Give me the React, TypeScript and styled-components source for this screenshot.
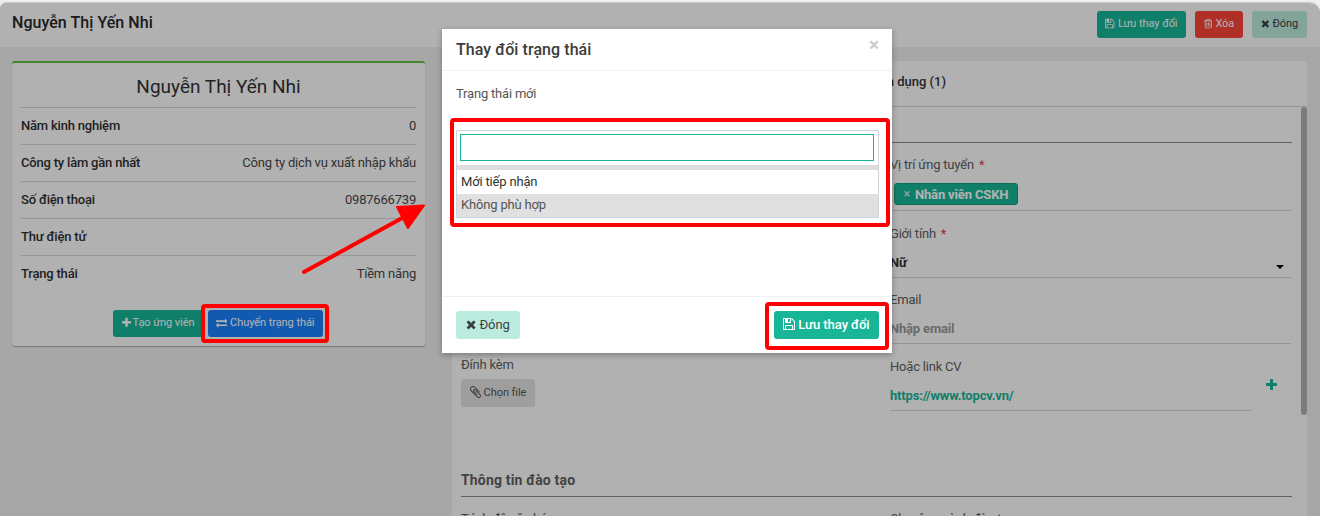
import React from "react";
import styled, { createGlobalStyle } from "styled-components";

const Global = createGlobalStyle`
  *, *::before, *::after { box-sizing: border-box; }
  html, body { margin: 0; height: 516px; overflow: hidden; }
  body { font-family: Roboto, "Noto Sans", sans-serif; font-size: 13px; color: #333; background: #ededf2; }
`;

/* ---------- icons ---------- */

const glyphs = {
  save: { box: "128 0 1536 1792", w: 0.857, d: "M512 1536h768v-384h-768v384zm896 0h128v-896q0-14-10-38.5t-20-34.5l-281-281q-10-10-34-20t-39-10v416q0 40-28 68t-68 28h-576q-40 0-68-28t-28-68v-416h-128v1280h128v-416q0-40 28-68t68-28h832q40 0 68 28t28 68v416zm-384-928v-320q0-13-9.5-22.5t-22.5-9.5h-192q-13 0-22.5 9.5t-9.5 22.5v320q0 13 9.5 22.5t22.5 9.5h192q13 0 22.5-9.5t9.5-22.5zm640 32v928q0 40-28 68t-68 28h-1344q-40 0-68-28t-28-68v-1344q0-40 28-68t68-28h928q40 0 88 20t76 48l280 280q28 28 48 76t20 88z" },
  trash: { box: "192 0 1408 1792", w: 0.786, d: "M704 736v576q0 14-9 23t-23 9h-64q-14 0-23-9t-9-23v-576q0-14 9-23t23-9h64q14 0 23 9t9 23zm256 0v576q0 14-9 23t-23 9h-64q-14 0-23-9t-9-23v-576q0-14 9-23t23-9h64q14 0 23 9t9 23zm256 0v576q0 14-9 23t-23 9h-64q-14 0-23-9t-9-23v-576q0-14 9-23t23-9h64q14 0 23 9t9 23zm128 724v-948h-896v948q0 22 7 40.5t14.5 27 10.5 8.5h832q3 0 10.5-8.5t14.5-27 7-40.5zm-672-1076h448l-48-117q-7-9-17-11h-317q-10 2-17 11zm928 32v64q0 14-9 23t-23 9h-96v948q0 83-47 143.5t-113 60.5h-832q-66 0-113-58.5t-47-141.5v-952h-96q-14 0-23-9t-9-23v-64q0-14 9-23t23-9h309l70-167q15-37 54-63t79-26h320q40 0 79 26t54 63l70 167h309q14 0 23 9t9 23z" },
  times: { box: "192 0 1408 1792", w: 0.786, d: "M1490 1322q0 40-28 68l-136 136q-28 28-68 28t-68-28l-294-294-294 294q-28 28-68 28t-68-28l-136-136q-28-28-28-68t28-68l294-294-294-294q-28-28-28-68t28-68l136-136q28-28 68-28t68 28l294 294 294-294q28-28 68-28t68 28l136 136q28 28 28 68t-28 68l-294 294 294 294q28 28 28 68z" },
  plus: { box: "192 0 1408 1792", w: 0.786, d: "M1600 736v192q0 40-28 68t-68 28h-416v416q0 40-28 68t-68 28h-192q-40 0-68-28t-28-68v-416h-416q-40 0-68-28t-28-68v-192q0-40 28-68t68-28h416v-416q0-40 28-68t68-28h192q40 0 68 28t28 68v416h416q40 0 68 28t28 68z" },
  exchange: { box: "0 0 1792 1792", w: 1, d: "M1792 1184v192q0 13-9.5 22.5t-22.5 9.5h-1376v192q0 13-9.5 22.5t-22.5 9.5q-12 0-24-10l-319-320q-9-9-9-22 0-14 9-23l320-320q9-9 23-9 13 0 22.5 9.5t9.5 22.5v192h1376q13 0 22.5 9.5t9.5 22.5zm0-544q0 14-9 23l-320 320q-9 9-23 9-13 0-22.5-9.5t-9.5-22.5v-192h-1376q-13 0-22.5-9.5t-9.5-22.5v-192q0-13 9.5-22.5t22.5-9.5h1376v-192q0-14 9-23t23-9q12 0 24 10l319 319q9 9 9 23z" },
  clip: { box: "192 0 1408 1792", w: 0.786, d: "M1596 1385q0 117-79 196t-196 79q-135 0-235-100l-777-776q-113-115-113-271 0-159 110-270t269-111q158 0 273 113l605 606q10 10 10 22 0 16-30.5 46.5t-46.5 30.5q-13 0-23-10l-606-607q-79-77-181-77-106 0-179 75t-73 181q0 105 76 181l776 777q63 63 145 63 64 0 106-42t42-106q0-82-63-145l-581-581q-26-24-60-24-29 0-48 19t-19 48q0 32 25 59l410 410q10 10 10 22 0 16-31 47t-47 31q-12 0-22-10l-410-410q-63-61-63-149 0-82 57-139t139-57q88 0 149 63l581 581q100 98 100 235z" },
};

const IconSvg = styled.svg`
  display: block;
  flex: none;
  fill: currentColor;
`;

function Icon({ name, size }: { name: keyof typeof glyphs; size: number }) {
  const g = glyphs[name];
  return (
    <IconSvg viewBox={g.box} width={size * g.w} height={size}>
      <path d={g.d} />
    </IconSvg>
  );
}

/* ---------- page ---------- */

const Page = styled.div`
  position: relative;
  width: 1320px;
  height: 516px;
  padding-top: 2px;
  overflow: hidden;
  background: #ededf2;
`;

const Window = styled.div`
  position: relative;
  height: 514px;
  border-top: 1px solid #c9c9cc;
  border-radius: 6px 10px 0 0;
  background: #efefef;
  overflow: hidden;
`;

const Header = styled.header`
  display: flex;
  justify-content: space-between;
  height: 44px;
  padding: 8px 13px 0 12px;
  background: #fefefe;
`;

const PageTitle = styled.h1`
  margin: 0;
  font-size: 16px;
  font-weight: 500;
  line-height: 24px;
  letter-spacing: 0.05px;
  color: #282828;
`;

const Actions = styled.div`
  display: flex;
  gap: 9px;
`;

type Tone = "primary" | "danger" | "soft" | "info" | "muted";
const tones: Record<Tone, [string, string]> = {
  primary: ["#18b697", "#fff"],
  danger: ["#fc4438", "#fff"],
  soft: ["#bbebdf", "#3c4043"],
  info: ["#1a82fc", "#fff"],
  muted: ["#e2e2e2", "#555"],
};

const Button = styled.button<{ $tone: Tone; $w: number; $h?: number; $size?: number; $weight?: number; $gap?: number }>`
  display: flex;
  align-items: center;
  justify-content: center;
  gap: ${(p) => p.$gap ?? 3}px;
  width: ${(p) => p.$w}px;
  height: ${(p) => p.$h ?? 27}px;
  padding: 0 0 2px;
  border: 0;
  border-radius: 3px;
  font-family: inherit;
  font-size: ${(p) => p.$size ?? 11}px;
  font-weight: ${(p) => p.$weight ?? 400};
  letter-spacing: -0.06px;
  white-space: nowrap;
  background: ${(p) => tones[p.$tone][0]};
  color: ${(p) => tones[p.$tone][1]};
`;

const Content = styled.main`
  display: flex;
  align-items: flex-start;
  gap: 27px;
  padding: 14px 13px 0 12px;
`;

const ProfileCard = styled.section`
  width: 413px;
  height: 285px;
  padding: 0 9px;
  border-top: 2px solid #5fc23b;
  border-radius: 3px;
  background: #fefefe;
  box-shadow: 0 1px 1px rgba(0, 0, 0, 0.3);
`;

const ProfileName = styled.h2`
  margin: 0;
  height: 44px;
  font-size: 19px;
  font-weight: 400;
  line-height: 47px;
  text-align: center;
  color: #333;
`;

const InfoRow = styled.div`
  display: flex;
  justify-content: space-between;
  height: 37px;
  border-top: 1px solid #d8d8d8;
  line-height: 36px;
  letter-spacing: -0.2px;
`;

const InfoLabel = styled.span`
  font-weight: 500;
  color: #303030;
`;

const InfoValue = styled.span`
  color: #484848;
`;

const CardActions = styled.div`
  display: flex;
  justify-content: center;
  gap: 4px;
  padding: 18px 2px 0 0;
`;

const FormCard = styled.section`
  width: 855px;
  height: 480px;
  border-radius: 3px;
  background: #fefefe;
`;

const Tabs = styled.div`
  height: 46px;
  padding-right: 361px;
  border-bottom: 1px solid #d8d8d8;
  text-align: right;
  font-weight: 500;
  line-height: 41px;
  color: #333;
`;

const FormScroll = styled.div`
  display: flex;
  justify-content: space-between;
  padding-left: 9px;
`;

const Form = styled.div`
  width: 831px;
`;

const SectionTitle = styled.h3<{ $h: number }>`
  display: flex;
  align-items: flex-end;
  margin: 0;
  height: ${(p) => p.$h}px;
  padding-bottom: 7px;
  border-bottom: 1px solid #8c8c8c;
  font-size: 14px;
  font-weight: 700;
  line-height: 17px;
  letter-spacing: 0.17px;
  color: #606060;
`;

const FieldGrid = styled.div`
  display: grid;
  grid-template-columns: 402px 401px;
  column-gap: 27px;
  grid-template-rows: 68px 67px 66px 67px;
`;

const Field = styled.div<{ $w?: number }>`
  display: flex;
  flex-direction: column;
  justify-content: space-between;
  width: ${(p) => (p.$w ? p.$w + "px" : "auto")};
  border-bottom: 1px solid #d5d5d9;
`;

const Label = styled.label<{ $top?: number }>`
  display: block;
  padding-top: ${(p) => p.$top ?? 14}px;
  line-height: 16px;
  letter-spacing: -0.2px;
  color: #606060;
`;

const Required = styled.span`
  margin-left: 5px;
  color: #e23c4a;
`;

const Value = styled.div<{ $color: string }>`
  display: flex;
  justify-content: space-between;
  height: 29px;
  font-weight: 700;
  line-height: 29px;
  letter-spacing: -0.18px;
  color: ${(p) => p.$color};
`;

const Chip = styled.span`
  display: flex;
  align-items: center;
  justify-content: center;
  gap: 5px;
  width: 124px;
  height: 22px;
  margin: 0 0 5px 4px;
  border: 1px solid #159a80;
  border-radius: 3px;
  background: #18b697;
  color: #fff;
  font-weight: 700;
  letter-spacing: -0.15px;
`;

const ChipClose = styled.span`
  font-size: 12px;
  color: #c5e9e1;
`;

const Caret = styled.i`
  width: 0;
  height: 0;
  margin: 17px 7px 0 0;
  border: 4px solid transparent;
  border-top-color: #000;
  border-bottom: 0;
`;

const Attachment = styled.div`
  display: flex;
  flex-direction: column;
  gap: 6px;
  grid-row: 4;
`;

const LinkRow = styled.div`
  display: flex;
  gap: 15px;
`;

const AddLink = styled.span`
  display: flex;
  padding-top: 34px;
  color: #18b697;
`;

const NextFields = styled(FieldGrid)`
  grid-template-rows: 30px;
`;

const Scrollbar = styled.div`
  width: 6px;
  height: 308px;
  border-radius: 3px;
  background: #b0b0b0;
`;

/* ---------- modal ---------- */

const Overlay = styled.div`
  position: absolute;
  inset: 0;
  display: flex;
  align-items: flex-start;
  padding: 26px 0 0 442px;
  background: rgba(0, 0, 0, 0.3);
`;

const Dialog = styled.div`
  width: 450px;
  height: 324px;
  display: flex;
  flex-direction: column;
  background: #fff;
  box-shadow: 0 2px 6px rgba(0, 0, 0, 0.3);
`;

const DialogHeader = styled.div`
  display: flex;
  justify-content: space-between;
  height: 42px;
  padding: 0 13px 0 14px;
  border-bottom: 1px solid #f0f0f0;
`;

const DialogTitle = styled.h4`
  margin: 0;
  font-size: 16px;
  font-weight: 500;
  line-height: 41px;
  letter-spacing: 0.07px;
  color: #3c3c3c;
`;

const DialogClose = styled.span`
  font-size: 19px;
  font-weight: 700;
  line-height: 31px;
  color: #ccc;
`;

const DialogBody = styled.div`
  flex: 1;
  padding: 15px 13px 0 14px;
`;

const DialogLabel = styled.div`
  height: 44px;
  line-height: 16px;
  letter-spacing: -0.2px;
  color: #555;
`;

const Dropdown = styled.div`
  height: 88px;
  border: 1px solid #d0d5dd;
  letter-spacing: -0.17px;
`;

const Search = styled.input`
  display: block;
  width: 414px;
  height: 27px;
  margin: 3px 3px 4px;
  padding: 0 6px;
  border: 1px solid #1ab394;
  border-radius: 0;
  outline: 0;
  background: #fff;
`;

const Separator = styled.div`
  height: 5px;
  background: #ddd;
`;

const Option = styled.div<{ $active?: boolean }>`
  height: ${(p) => (p.$active ? 23 : 24)}px;
  padding-left: 4px;
  line-height: ${(p) => (p.$active ? 21 : 24)}px;
  color: ${(p) => (p.$active ? "#555" : "#333")};
  background: ${(p) => (p.$active ? "#e0e0e0" : "#fff")};
`;

const DialogFooter = styled.div`
  display: flex;
  justify-content: space-between;
  height: 57px;
  padding: 14px 13px 0 14px;
  border-top: 1px solid #f0f0f0;
`;

/* ---------- annotations ---------- */

const Highlight = styled.div<{ $x: number; $y: number; $w: number; $h: number }>`
  position: absolute;
  left: ${(p) => p.$x}px;
  top: ${(p) => p.$y}px;
  width: ${(p) => p.$w}px;
  height: ${(p) => p.$h}px;
  border: 4px solid #fe0000;
  border-radius: 4px;
  pointer-events: none;
`;

const Arrow = styled.svg`
  position: absolute;
  left: 296px;
  top: 198px;
  pointer-events: none;
`;

const info = [
  ["Năm kinh nghiệm", "0"],
  ["Công ty làm gần nhất", "Công ty dịch vụ xuất nhập khẩu"],
  ["Số điện thoại", "0987666739"],
  ["Thư điện tử", ""],
  ["Trạng thái", "Tiềm năng"],
];

export default function App() {
  return (
    <>
      <Global />
      <Page>
        <Window>
          <Header>
            <PageTitle>Nguyễn Thị Yến Nhi</PageTitle>
            <Actions>
              <Button $tone="primary" $w={89}><Icon name="save" size={11} />Lưu thay đổi</Button>
              <Button $tone="danger" $w={48}><Icon name="trash" size={11} />Xóa</Button>
              <Button $tone="soft" $w={55}><Icon name="times" size={11} />Đóng</Button>
            </Actions>
          </Header>
          <Content>
            <ProfileCard>
              <ProfileName>Nguyễn Thị Yến Nhi</ProfileName>
              {info.map(([label, value]) => (
                <InfoRow key={label}>
                  <InfoLabel>{label}</InfoLabel>
                  <InfoValue>{value}</InfoValue>
                </InfoRow>
              ))}
              <CardActions>
                <Button $tone="primary" $w={91} $gap={2}><Icon name="plus" size={11.5} />Tạo ứng viên</Button>
                <Button $tone="info" $w={115}><Icon name="exchange" size={11.5} />Chuyển trạng thái</Button>
              </CardActions>
            </ProfileCard>
            <FormCard>
              <Tabs>Tuyển dụng (1)</Tabs>
              <FormScroll>
                <Form>
                  <SectionTitle $h={36} />
                  <FieldGrid>
                    <span />
                    <Field>
                      <Label>Vị trí ứng tuyển<Required>*</Required></Label>
                      <Chip><ChipClose>×</ChipClose>Nhân viên CSKH</Chip>
                    </Field>
                    <span />
                    <Field>
                      <Label $top={15}>Giới tính<Required>*</Required></Label>
                      <Value $color="#333">Nữ<Caret /></Value>
                    </Field>
                    <span />
                    <Field>
                      <Label>Email</Label>
                      <Value $color="#999">Nhập email</Value>
                    </Field>
                    <Attachment>
                      <Label $top={13}>Đính kèm</Label>
                      <Button $tone="muted" $w={74} $h={28}><Icon name="clip" size={14} />Chọn file</Button>
                    </Attachment>
                    <LinkRow>
                      <Field $w={361}>
                        <Label $top={15}>Hoặc link CV</Label>
                        <Value $color="#18b697">https://www.topcv.vn/</Value>
                      </Field>
                      <AddLink><Icon name="plus" size={14} /></AddLink>
                    </LinkRow>
                  </FieldGrid>
                  <SectionTitle $h={86}>Thông tin đào tạo</SectionTitle>
                  <NextFields>
                    <Label>Trình độ văn hóa</Label>
                    <Label>Chuyên ngành đào tạo</Label>
                  </NextFields>
                </Form>
                <Scrollbar />
              </FormScroll>
            </FormCard>
          </Content>
          <Overlay>
            <Dialog role="dialog">
              <DialogHeader>
                <DialogTitle>Thay đổi trạng thái</DialogTitle>
                <DialogClose>×</DialogClose>
              </DialogHeader>
              <DialogBody>
                <DialogLabel>Trạng thái mới</DialogLabel>
                <Dropdown>
                  <Search />
                  <Separator />
                  <Option>Mới tiếp nhận</Option>
                  <Option $active>Không phù hợp</Option>
                </Dropdown>
              </DialogBody>
              <DialogFooter>
                <Button $tone="soft" $w={64} $h={28} $size={13}><Icon name="times" size={13} />Đóng</Button>
                <Button $tone="primary" $w={105} $h={28} $size={13} $weight={500}><Icon name="save" size={14} />Lưu thay đổi</Button>
              </DialogFooter>
            </Dialog>
          </Overlay>
        </Window>
        <Highlight $x={450} $y={118} $w={440} $h={109} />
        <Highlight $x={201} $y={304} $w={128} $h={39} />
        <Highlight $x={765} $y={302} $w={124} $h={48} />
        <Arrow width="134" height="80">
          <path d="M8 74L108 19" stroke="#fe0000" strokeWidth="4" strokeLinecap="round" />
          <path d="M128 7.5L101 9L112 30Z" fill="#fe0000" stroke="#fe0000" strokeWidth="2" strokeLinejoin="round" />
        </Arrow>
      </Page>
    </>
  );
}
